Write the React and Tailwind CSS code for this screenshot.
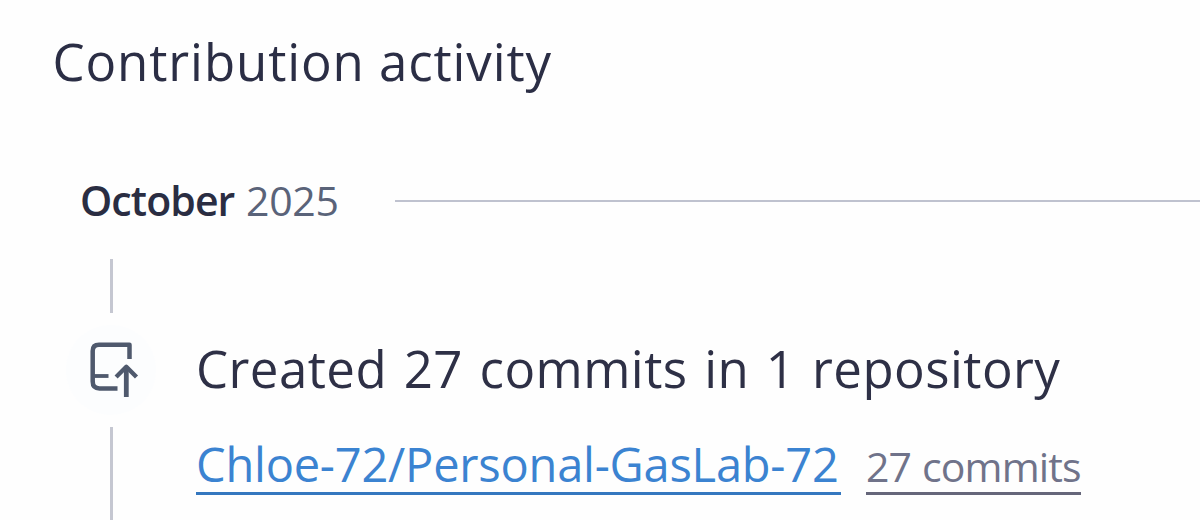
function RepoPushIcon() {
  return (
    <svg
      className="h-[64px] w-[64px]"
      viewBox="79.5 338 64 64"
      fill="none"
      stroke="#4f596d"
      strokeWidth="4.5"
      strokeLinejoin="round"
      aria-hidden="true"
    >
      <path d="M130 359V344.8H99.5Q93.2 344.8 93.2 351V381.5Q93.2 388.4 100 388.4H118" />
      <path d="M93.2 376H109" strokeWidth="3.8" />
      <path d="M126.8 397V367.5" strokeWidth="4.8" />
      <path d="M116.6 377L126.8 366.8L137 377" strokeWidth="4.4" />
    </svg>
  );
}

function MonthHeading({ month, year }) {
  return (
    <h3 className="mt-[85px] flex h-[48px] items-center pl-[80px] text-[41px] leading-[48px]">
      <span className="w-[166px] shrink-0 font-semibold tracking-[-0.9px] whitespace-nowrap text-[#2a2d42]">{month}</span>
      <span className="w-[149px] shrink-0 tracking-[-0.3px] text-[#5a6379]">{year}</span>
      <span className="mt-[1px] h-[2px] flex-1 bg-[#bfc2cf]" />
    </h3>
  );
}

export default function App() {
  return (
    <main className="h-[520px] w-[1200px] overflow-hidden bg-[#fefefe] pt-[31px] font-['Open_Sans','Noto_Sans',sans-serif] font-normal">
      <h2 className="pl-[52.5px] text-[51px] leading-[60px] tracking-[0.9px] text-[#2b2e45]">
        Contribution activity
      </h2>
      <MonthHeading month="October" year="2025" />
      <section className="mt-[35px] flex">
        <div className="flex w-[195px] shrink-0 flex-col items-start">
          <span className="ml-[110px] h-[54px] w-[3px] bg-[#c5c7d1]" />
          <span className="my-[12px] ml-[66px] flex h-[90px] w-[90px] items-center justify-center rounded-full bg-[#fcfdfe]">
            <RepoPushIcon />
          </span>
          <span className="ml-[110px] h-[93px] w-[3px] bg-[#c5c7d1]" />
        </div>
        <div className="pt-[79px]">
          <p className="pl-[1px] text-[51px] leading-[60px] tracking-[0.45px] whitespace-nowrap text-[#2e3046] [word-spacing:2.9px]">
            Created 27 commits in 1 repository
          </p>
          <div className="mt-[40px] flex items-start whitespace-nowrap">
            <a
              href="#repository"
              className="ml-[1px] h-[57px] w-[645px] border-b-3 border-[#3477bf] text-[47px] leading-[52px] tracking-[-0.22px] text-[#3b83d1]"
            >
              Chloe-72/Personal-GasLab-72
            </a>
            <a
              href="#commits"
              className="ml-[25px] h-[57px] w-[215px] border-b-3 border-[#65667a] text-[41px] leading-[56px] font-normal tracking-[-0.85px] text-[#70738a] [word-spacing:1px]"
            >
              27 commits
            </a>
          </div>
        </div>
      </section>
    </main>
  );
}
